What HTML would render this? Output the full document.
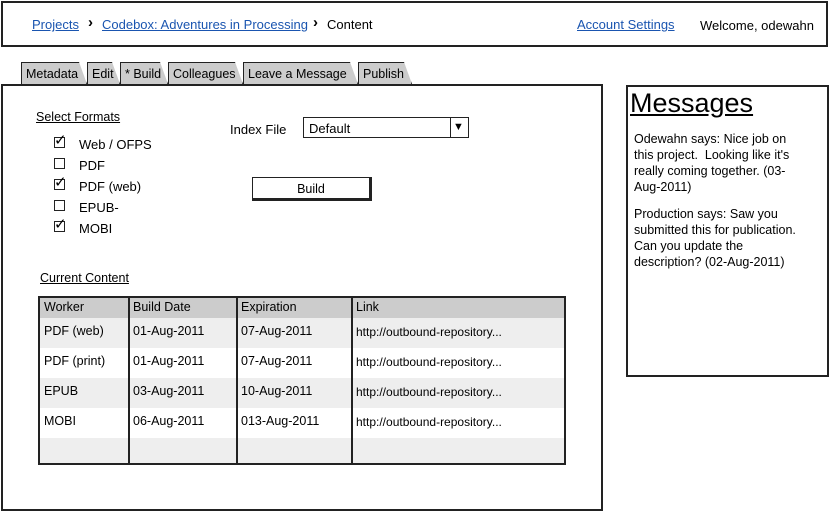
<!DOCTYPE html>
<html><head><style>
*{margin:0;padding:0;box-sizing:border-box}
body{width:830px;height:512px;background:#fff;position:relative;font-family:"Liberation Sans",sans-serif;font-size:13px;color:#000;overflow:hidden}
.a{position:absolute;white-space:nowrap}
.lnk{color:#1a55b0;text-decoration:underline}
.box{position:absolute;border:2px solid #222;background:#fff}
.cb{position:absolute;width:11px;height:11px;border:1.5px solid #222;background:#fff}
.tab{position:absolute;top:62px;height:22px;background:#ccc;border:1.5px solid #222;border-bottom:none;font-size:12.5px;padding:4px 4px 0 4px;clip-path:polygon(0 0,calc(100% - 8px) 0,100% 100%,0 100%);}
</style></head><body>
<div class="box" style="left:1px;top:1px;width:827px;height:46px"></div>
<span class="a lnk" style="left:32px;top:17px">Projects</span>
<span class="a" style="left:88px;top:14px;font-weight:bold;font-size:15px">›</span>
<span class="a lnk" style="left:102px;top:17px">Codebox: Adventures in Processing</span>
<span class="a" style="left:313px;top:14px;font-weight:bold;font-size:15px">›</span>
<span class="a" style="left:327px;top:17px">Content</span>
<span class="a lnk" style="left:577px;top:17px">Account Settings</span>
<span class="a" style="left:700px;top:18px">Welcome, odewahn</span>

<div class="tab" style="left:21px;width:66px">Metadata</div>
<div class="tab" style="left:87px;width:33px">Edit</div>
<div class="tab" style="left:120px;width:48px">* Build</div>
<div class="tab" style="left:168px;width:75px">Colleagues</div>
<div class="tab" style="left:243px;width:115px">Leave a Message</div>
<div class="tab" style="left:358px;width:54px">Publish</div>

<div class="box" style="left:1px;top:84px;width:602px;height:427px"></div>
<span class="a" style="left:36px;top:110px;text-decoration:underline;font-size:12.5px">Select Formats</span>
<div class="cb" style="left:54px;top:137px"></div><span class="a" style="left:54px;top:131px;font-size:15px">✓</span><span class="a" style="left:79px;top:137px">Web / OFPS</span>
<div class="cb" style="left:54px;top:158px"></div><span class="a" style="left:79px;top:158px">PDF</span>
<div class="cb" style="left:54px;top:179px"></div><span class="a" style="left:54px;top:173px;font-size:15px">✓</span><span class="a" style="left:79px;top:179px">PDF (web)</span>
<div class="cb" style="left:54px;top:200px"></div><span class="a" style="left:79px;top:200px">EPUB-</span>
<div class="cb" style="left:54px;top:221px"></div><span class="a" style="left:54px;top:215px;font-size:15px">✓</span><span class="a" style="left:79px;top:221px">MOBI</span>

<span class="a" style="left:230px;top:122px">Index File</span>
<div class="a" style="left:303px;top:117px;width:166px;height:21px;border:1.5px solid #222"></div>
<span class="a" style="left:309px;top:121px">Default</span>
<div class="a" style="left:450px;top:118px;width:18px;height:19px;border-left:1.5px solid #222"></div>
<span class="a" style="left:453px;top:121px;font-size:11px">▼</span>
<div class="a" style="left:252px;top:177px;width:120px;height:24px;border:1.5px solid #222;border-right-width:3px;border-bottom-width:3px;text-align:center;padding-top:4px;font-size:12.5px">Build</div>

<span class="a" style="left:40px;top:271px;text-decoration:underline;font-size:12.5px">Current Content</span>
<div class="a" style="left:38px;top:296px;width:528px;height:169px;border:2px solid #222;background:#fff;overflow:hidden">
<div class="a" style="left:0;top:0;width:100%;height:20px;background:#ccc"></div>
<div class="a" style="left:0;top:20px;width:100%;height:30px;background:#eee"></div>
<div class="a" style="left:0;top:80px;width:100%;height:30px;background:#eee"></div>
<div class="a" style="left:0;top:140px;width:100%;height:30px;background:#eee"></div>
<div class="a" style="left:88px;top:0;width:2px;height:100%;background:#222"></div>
<div class="a" style="left:196px;top:0;width:2px;height:100%;background:#222"></div>
<div class="a" style="left:311px;top:0;width:2px;height:100%;background:#222"></div>
</div>
<div style="font-size:12.5px">
<span class="a" style="left:44px;top:300px">Worker</span><span class="a" style="left:133px;top:300px">Build Date</span><span class="a" style="left:241px;top:300px">Expiration</span><span class="a" style="left:356px;top:300px">Link</span>
<span class="a" style="left:44px;top:324px">PDF (web)</span><span class="a" style="left:133px;top:324px">01-Aug-2011</span><span class="a" style="left:241px;top:324px">07-Aug-2011</span><span class="a" style="left:356px;top:325px;font-size:12px">http://outbound-repository...</span>
<span class="a" style="left:44px;top:354px">PDF (print)</span><span class="a" style="left:133px;top:354px">01-Aug-2011</span><span class="a" style="left:241px;top:354px">07-Aug-2011</span><span class="a" style="left:356px;top:355px;font-size:12px">http://outbound-repository...</span>
<span class="a" style="left:44px;top:384px">EPUB</span><span class="a" style="left:133px;top:384px">03-Aug-2011</span><span class="a" style="left:241px;top:384px">10-Aug-2011</span><span class="a" style="left:356px;top:385px;font-size:12px">http://outbound-repository...</span>
<span class="a" style="left:44px;top:414px">MOBI</span><span class="a" style="left:133px;top:414px">06-Aug-2011</span><span class="a" style="left:241px;top:414px">013-Aug-2011</span><span class="a" style="left:356px;top:415px;font-size:12px">http://outbound-repository...</span>
</div>

<div class="box" style="left:626px;top:85px;width:203px;height:292px"></div>
<span class="a" style="left:630px;top:88px;font-size:27px;text-decoration:underline">Messages</span>
<div class="a" style="left:634px;top:131px;width:175px;white-space:normal;font-size:12.5px;line-height:16px">Odewahn says: Nice job on this project.&nbsp; Looking like it's really coming together. (03-Aug-2011)</div>
<div class="a" style="left:634px;top:206px;width:175px;white-space:normal;font-size:12.5px;line-height:16px">Production says: Saw you submitted this for publication. Can you update the description? (02-Aug-2011)</div>
</body></html>
